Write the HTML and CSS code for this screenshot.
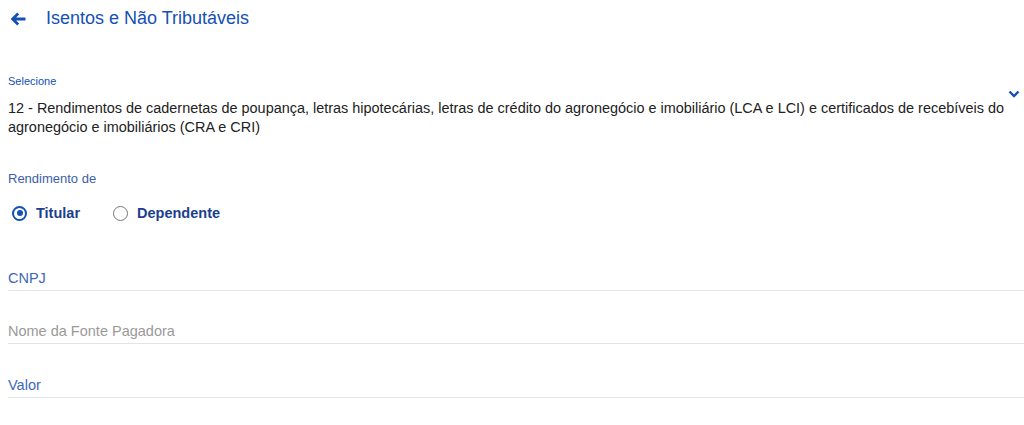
FILE: index.html
```html
<!DOCTYPE html>
<html lang="pt-BR">
<head>
<meta charset="utf-8">
<link rel="stylesheet" href="styles.css">
</head>
<body>
<header class="top">
  <svg class="back" width="16" height="14" viewBox="0 0 16 14"><path d="M15.5 7H3M8.2 1.6L2.6 7l5.6 5.4" fill="none" stroke="#1351b4" stroke-width="2.8"/></svg>
  <h1 class="title">Isentos e Não Tributáveis</h1>
</header>
<main class="form">
  <div class="select">
    <div class="select-label">Selecione</div>
    <div class="select-value">12 - Rendimentos de cadernetas de poupança, letras hipotecárias, letras de crédito do agronegócio e imobiliário (LCA e LCI) e certificados de recebíveis do agronegócio e imobiliários (CRA e CRI)</div>
    <svg class="chev" width="12" height="8" viewBox="0 0 12 8"><path d="M1.5 1.5L6 6l4.5-4.5" fill="none" stroke="#1351b4" stroke-width="2.4"/></svg>
  </div>
  <div class="group-label">Rendimento de</div>
  <div class="radios">
    <label class="radio"><span class="dot on"></span>Titular</label>
    <label class="radio"><span class="dot"></span>Dependente</label>
  </div>
  <div class="fields">
    <div class="field"><span class="blue">CNPJ</span></div>
    <div class="field"><span class="gray">Nome da Fonte Pagadora</span></div>
    <div class="field"><span class="blue">Valor</span></div>
  </div>
</main>
</body>
</html>
```
FILE: styles.css
```css
* { box-sizing: border-box; }
html, body { margin: 0; padding: 0; background: #fff; }
body { font-family: "Liberation Sans", Arial, sans-serif; padding-left: 8px; overflow: hidden; }
.top { display: flex; align-items: center; height: 36px; }
.back { margin-left: 2px; margin-right: 20px; margin-top: 1px; }
.title { margin: 0; font-size: 18px; font-weight: normal; color: #1351b4; }
.form { padding-top: 38px; }
.select { position: relative; padding-right: 14px; }
.select-label { font-size: 11px; color: #1351b4; line-height: 14px; }
.select-value { margin-top: 11px; font-size: 14.45px; line-height: 19px; color: #222; }
.chev { position: absolute; right: 4px; top: 16px; }
.group-label { margin-top: 34px; font-size: 13px; color: #3d5ea8; line-height: 16px; }
.radios { display: flex; gap: 29px; margin-top: 17px; height: 18px; align-items: center; }
.radio { display: flex; align-items: center; gap: 9px; font-size: 14.5px; font-weight: bold; color: #1a3f8e; }
.dot { width: 15px; height: 15px; border: 1.5px solid #777; border-radius: 50%; margin-left: 4px; position: relative; }
.dot.on { border-color: #1351b4; border-width: 2px; }
.dot.on::after { content: ""; position: absolute; left: 2.5px; top: 2.5px; width: 6px; height: 6px; border-radius: 50%; background: #1351b4; }
.fields { margin-top: 15px; }
.field { border-bottom: 1px solid #e4e4e4; height: 53.5px; display: flex; align-items: flex-end; padding-bottom: 4px; font-size: 14.5px; }
.blue { color: #3d68b8; }
.gray { color: #9a9a9a; }
```
